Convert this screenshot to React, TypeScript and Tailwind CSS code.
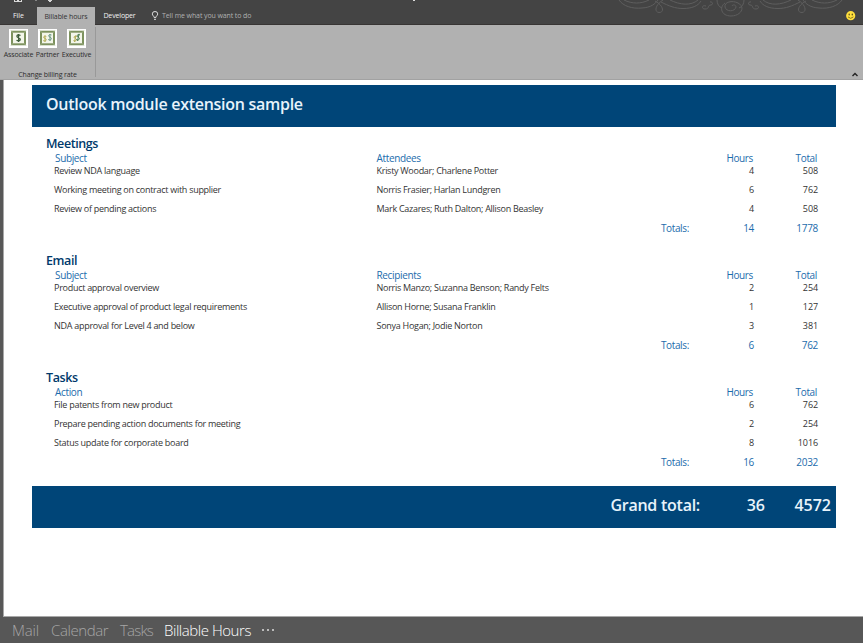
import React from "react";

type Row = [string, string, string, string];
type SectionData = {
  title: string;
  first: string;
  second: string;
  rows: Row[];
  hours: string;
  total: string;
};

const sections: SectionData[] = [
  {
    title: "Meetings",
    first: "Subject",
    second: "Attendees",
    rows: [
      ["Review NDA language", "Kristy Woodar; Charlene Potter", "4", "508"],
      ["Working meeting on contract with supplier", "Norris Frasier; Harlan Lundgren", "6", "762"],
      ["Review of pending actions", "Mark Cazares; Ruth Dalton; Allison Beasley", "4", "508"],
    ],
    hours: "14",
    total: "1778",
  },
  {
    title: "Email",
    first: "Subject",
    second: "Recipients",
    rows: [
      ["Product approval overview", "Norris Manzo; Suzanna Benson; Randy Felts", "2", "254"],
      ["Executive approval of product legal requirements", "Allison Horne; Susana Franklin", "1", "127"],
      ["NDA approval for Level 4 and below", "Sonya Hogan; Jodie Norton", "3", "381"],
    ],
    hours: "6",
    total: "762",
  },
  {
    title: "Tasks",
    first: "Action",
    second: "",
    rows: [
      ["File patents from new product", "", "6", "762"],
      ["Prepare pending action documents for meeting", "", "2", "254"],
      ["Status update for corporate board", "", "8", "1016"],
    ],
    hours: "16",
    total: "2032",
  },
];

function Section({ data }: { data: SectionData }) {
  return (
    <section className="h-[117px] text-[9px] tracking-[-0.28px] text-[#333]">
      <h2 className="h-4 pl-[14px] text-[12.5px] leading-[15px] font-semibold tracking-[-0.42px] text-[#00396b]">{data.title}</h2>
      <div className="flex h-3 text-[10px] leading-3 tracking-[-0.35px] text-[#1c6cac]">
        <span className="w-[344px] pl-[23px]">{data.first}</span>
        <span className="w-[313px] pl-[0.5px]">{data.second}</span>
        <span className="w-16 text-right">Hours</span>
        <span className="w-16 text-right">Total</span>
      </div>
      {data.rows.map((r) => (
        <div key={r[0]} className="mb-[6px] flex h-[13px] leading-[13px] whitespace-nowrap">
          <span className="w-[344px] pl-[22px]">{r[0]}</span>
          <span className="w-[314px] pl-[0.5px]">{r[1]}</span>
          <span className="w-16 text-right tracking-[-0.1px]">{r[2]}</span>
          <span className="w-16 text-right tracking-[-0.1px]">{r[3]}</span>
        </div>
      ))}
      <div className="flex h-[14px] text-[10px] leading-[14px] text-[#1c6cac]">
        <span className="w-[657px] text-right tracking-[-0.35px]">Totals:</span>
        <span className="w-[65px] text-right tracking-[-0.3px]">{data.hours}</span>
        <span className="w-16 text-right tracking-[-0.3px]">{data.total}</span>
      </div>
    </section>
  );
}

function MoneyIcon({ kind }: { kind: number }) {
  return (
    <svg className="block h-[19px] w-[19px]" viewBox="0 0 19 19" fill="none">
      <rect width="19" height="19" fill="#fff" />
      <rect x="3" y="2.7" width="13" height="12.6" fill="#f3f6ea" stroke="#7d925e" strokeWidth="2" />
      <path d="M2 1.7l2 2M17 1.7l-2 2M2 16.3l2-2M17 16.3l-2-2" stroke="#a9b992" strokeWidth=".8" />
      {kind === 0 && (
        <path d="M11.500 6.500C9.500 5.300 7.800 6 7.900 7.500C8 9 11.300 8.500 11.300 10.300C11.300 12 9 12.200 7.500 11.300M9.600 5v8" stroke="#3f5d3c" strokeWidth="1.300" />
      )}
      {kind === 1 && (
        <>
          <path d="M8.300 7.500C7 6.700 5.600 7.200 5.700 8.300C5.800 9.500 8.300 9.200 8.200 10.800C8.100 12.200 6.500 12.200 5.200 11.600M7 6.500v6.500" stroke="#b3ac55" />
          <path d="M13.500 6C12 5.200 10.600 5.700 10.700 7C10.800 8.300 13.500 8 13.400 9.700C13.300 11.200 11.500 11.200 10.200 10.500M12 5v7" stroke="#6d9788" />
        </>
      )}
      {kind === 2 && (
        <>
          <path d="M9.800 7.500C8.500 6.700 7 7.200 7.100 8.300C7.200 9.500 9.500 9.200 9.400 10.800C9.300 12.200 7.500 12.200 6.400 11.600M8.800 6.500L7.500 13" stroke="#b3ac55" />
          <path d="M13 6C11.500 5.200 10 5.700 10.100 7C10.200 8.300 12.500 8 12.400 9.700C12.300 11.200 10.500 11.200 9.300 10.500M12 4.800L10.500 12" stroke="#4d7d55" />
        </>
      )}
    </svg>
  );
}

function Swirl() {
  return (
    <>
      <path d="M4 0C8 6 17 9 27 8C36 7.500 40 4 43 0" />
      <path d="M9 0C17 4 26 4 34 0" />
      <path d="M48 0C40 5 39 12 44 12.500C50 12.500 48 5 40 1" />
      <path d="M46 2C54 6 60 8.500 68 8.500C77 8.500 83 6 86 1" />
      <path d="M55 0C65 5 76 6 83 0" />
      <path d="M91 6C87 4.500 86 9 90 9C95 9 92 5 96 5C99 4.500 97 1 95 2" />
    </>
  );
}

function Flourish() {
  return (
    <svg className="absolute top-0 left-[615px] h-[20px] w-[232px]" viewBox="0 0 232 20" fill="none" stroke="#5e5e5e" strokeWidth="1">
      <Swirl />
      <g transform="translate(231 0) scale(-1 1)">
        <Swirl />
      </g>
      <path d="M110 3C104 7 106 16 116 16C126 16 131 7 123 3C117 0 109 2 110 7C111 12 120 12 121 7C121 5 118 4 117 6" />
      <path d="M102 0C102 4 104 7 107 8M129 0C129 4 127 7 124 8" />
    </svg>
  );
}

function TitleBar() {
  return (
    <header className="relative flex h-[25px] items-end border-b border-[#383534] bg-[#444] text-[7px] text-[#f1f1f1]">
      <Flourish />
      <svg className="absolute top-0 left-[13px] h-[2px] w-[42px]" viewBox="0 0 42 2" fill="#d8d8d8">
        <path d="M1 0h1v1h6V0h1v2H1zM4 0h2v1H4zM35 0h4v1h-1v1h-2V1h-1z" />
        <rect x="22" width="2" height="1" fill="#858585" />
      </svg>
      <span className="absolute top-0 left-[413px] h-px w-[2px] bg-[#ddd]" />
      <span className="h-4 w-[37px] text-center leading-4">File</span>
      <span className="-mb-px h-[18px] w-[58px] bg-[#b1b1b1] pt-px text-center leading-[17px] tracking-[-0.1px] text-[#333]">Billable hours</span>
      <span className="h-4 w-[49px] text-center leading-4 tracking-[-0.15px]">Developer</span>
      <svg className="mb-[4px] ml-[7px] h-[9px] w-[8px]" viewBox="0 0 8 9" fill="none" stroke="#ddd">
        <path d="M3 6.4C3 5 1.3 4.6 1.3 2.9a2.7 2.4 0 0 1 5.4 0C6.700 4.600 5 5 5 6.400zM3 8.300h2" />
      </svg>
      <span className="ml-[3px] h-4 leading-4 tracking-[-0.1px] text-[#b0b0b0]">Tell me what you want to do</span>
      <svg className="absolute top-[11px] left-[846px] h-[10px] w-[10px]" viewBox="0 0 10 10">
        <circle cx="4.700" cy="4.700" r="4.6" fill="#ffdf3d" />
        <ellipse cx="3.2" cy="3.600" rx=".7" ry="1" fill="#5b5018" />
        <ellipse cx="6.300" cy="3.600" rx=".7" ry="1" fill="#5b5018" />
        <path d="M2 5.900Q4.700 8.800 7.400 5.900" fill="none" stroke="#6b5b16" strokeWidth=".8" />
      </svg>
    </header>
  );
}

function Ribbon() {
  return (
    <div className="relative flex h-[55px] border-b border-[#a2a2a2] bg-[#b1b1b1] text-[7px] text-[#2d2d2d]">
      <div className="my-[2px] w-[96px] border-r border-[#999]">
        <div className="flex pt-[2px] pl-1">
          {["Associate", "Partner", "Executive"].map((label, i) => (
            <div key={label} className="flex w-[29px] flex-col items-center whitespace-nowrap">
              <MoneyIcon kind={i} />
              <span className="mt-px leading-[12px] tracking-[-0.15px]">{label}</span>
            </div>
          ))}
        </div>
        <div className="mt-[9px] text-center leading-[10px] tracking-[-0.13px]">Change billing rate</div>
      </div>
      <svg className="absolute right-[5px] bottom-[2px] h-[5px] w-[6px]" viewBox="0 0 6 5" fill="none" stroke="#222" strokeWidth="1.4">
        <path d="M.5 4L3 1.500L5.500 4" />
      </svg>
    </div>
  );
}

export default function App() {
  return (
    <div className="flex h-[643px] w-[863px] flex-col overflow-hidden bg-[#575757] font-['Open_Sans','Noto_Sans',sans-serif]">
      <TitleBar />
      <Ribbon />
      <main className="ml-[3px] flex-1 border-b border-l border-[#a8a8a8] bg-white pt-[5px] pl-[28px]">
        <div className="h-[42px] w-[804px] bg-[#004578] pl-[14px] text-[16px] leading-[38px] font-semibold tracking-[-0.28px] text-[#e8f3fb]">Outlook module extension sample</div>
        <div className="mt-[9px] h-[350px]">
          {sections.map((s) => (
            <Section key={s.title} data={s} />
          ))}
        </div>
        <div className="flex h-[42px] w-[804px] bg-[#004578] text-[16px] leading-[38px] font-semibold text-[#e8f3fb]">
          <span className="w-[668px] text-right tracking-[-0.25px]">Grand total:</span>
          <span className="w-[65px] text-right">36</span>
          <span className="w-[66px] text-right">4572</span>
        </div>
      </main>
      <nav className="flex h-[26px] pl-3 text-[15px] leading-[27px] font-light text-[#a6a6a6]">
        <span className="w-[39px] tracking-[-0.2px]">Mail</span>
        <span className="w-[69px] tracking-[-0.4px]">Calendar</span>
        <span className="w-[44px] tracking-[-0.8px]">Tasks</span>
        <span className="w-[98px] tracking-[-0.45px] whitespace-nowrap text-white">Billable Hours</span>
        <span className="flex items-center gap-[3px]">
          {[0, 1, 2].map((i) => (
            <i key={i} className="h-[2px] w-[2px] bg-[#bbb]" />
          ))}
        </span>
      </nav>
    </div>
  );
}
